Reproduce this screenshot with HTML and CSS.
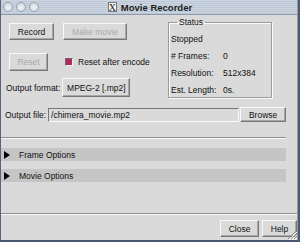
FILE: index.html
```html
<!DOCTYPE html>
<html lang="en">
<head>
    <meta charset="UTF-8">
    <title>Movie Recorder</title>
    <link rel="stylesheet" href="styles.css">
</head>
<body>
    <div class="window">
        <div class="titlebar">
            <div class="lights"><span></span><span></span><span></span></div>
            <div class="title"><span class="xicon">X</span>Movie Recorder</div>
        </div>

        <div class="content">
            <div class="top">
                <div class="controls">
                    <div class="row row-record">
                        <button class="btn btn-record">Record</button>
                        <button class="btn btn-make" disabled>Make movie</button>
                    </div>
                    <div class="row row-reset">
                        <button class="btn btn-reset" disabled>Reset</button>
                        <label class="check"><span class="box"></span>Reset after encode</label>
                    </div>
                    <div class="row row-format">
                        <span class="lbl">Output format:</span>
                        <button class="btn btn-menu">MPEG-2 [.mp2]</button>
                    </div>
                </div>

                <fieldset class="status">
                    <legend>Status</legend>
                    <div class="status-grid">
                        <span class="wide">Stopped</span>
                        <span># Frames:</span><span>0</span>
                        <span>Resolution:</span><span>512x384</span>
                        <span>Est. Length:</span><span>0s.</span>
                    </div>
                </fieldset>
            </div>

            <div class="file-row">
                <span class="lbl">Output file:</span>
                <input class="file-input" type="text" value="/chimera_movie.mp2">
                <button class="btn btn-browse">Browse</button>
            </div>

            <div class="sep sep-top"></div>

            <div class="section section-frame"><span class="arrow"></span>Frame Options</div>
            <div class="section section-movie"><span class="arrow"></span>Movie Options</div>

            <div class="sep sep-bottom"></div>

            <div class="bottom-row">
                <button class="btn btn-close">Close</button>
                <button class="btn btn-help">Help</button>
            </div>

            <svg class="grip" width="10" height="10" viewBox="0 0 10 10">
                <path d="M9 1 L1 9 M9 4 L4 9 M9 7 L7 9" stroke="#8a8a8a" stroke-width="1"/>
                <path d="M10 2 L2 10 M10 5 L5 10 M10 8 L8 10" stroke="#ffffff" stroke-width="1"/>
            </svg>
        </div>
    </div>
</body>
</html>
```

FILE: styles.css
```css
body {
    margin: 0;
    padding: 0;
    background-color: #4b5a74;
    font-family: 'Liberation Sans', Arial, sans-serif;
    font-size: 8.5px;
    color: #111;
}

.window {
    width: 298px;
    height: 240px;
    background-color: #dadada;
    border-left: 1px solid #56647c;
    border-right: 1px solid #9a9a9a;
    box-sizing: border-box;
    display: flex;
    flex-direction: column;
}

.titlebar {
    height: 15px;
    position: relative;
    background: repeating-linear-gradient(to bottom, #cdd5e0 0, #cdd5e0 1px, #bcc7d5 1px, #bcc7d5 2px);
    border-bottom: 1px solid #8e9aab;
    box-sizing: border-box;
    display: flex;
    align-items: center;
    justify-content: center;
}

.lights {
    position: absolute;
    left: 2px;
    top: 2px;
    display: flex;
    gap: 3px;
}

.lights span {
    width: 10px;
    height: 10px;
    border-radius: 50%;
    box-sizing: border-box;
    border: 1px solid #98a2ae;
    background: radial-gradient(circle at 50% 60%, #f0f2f5 0, #d6dbe2 70%);
}

.title {
    font-weight: bold;
    font-size: 9.5px;
    color: #1c1c1c;
    display: flex;
    align-items: center;
    margin-left: 2px;
}

.xicon {
    width: 9px;
    height: 10px;
    margin-right: 4px;
    border: 1px solid #777;
    background-color: #f4f4f4;
    font-family: 'Liberation Serif', serif;
    font-size: 10px;
    line-height: 10px;
    text-align: center;
    color: #222;
    box-sizing: border-box;
    font-weight: normal;
}

.content {
    flex: 1;
    position: relative;
    display: flex;
    flex-direction: column;
}

.btn {
    font-family: 'Liberation Sans', Arial, sans-serif;
    font-size: 8.5px;
    color: #111;
    background-color: #dadada;
    border: 1px solid;
    border-color: #f8f8f8 #777 #777 #f8f8f8;
    box-shadow: inset -1px -1px 0 #a8a8a8;
    padding: 0;
    margin: 0;
    box-sizing: border-box;
}

.btn:disabled {
    color: #a9a9a9;
}

.top {
    display: flex;
    height: 83px;
}

.controls {
    width: 167px;
    padding-top: 8px;
    display: flex;
    flex-direction: column;
}

.row {
    display: flex;
    align-items: center;
}

.row-record {
    height: 17px;
    padding-left: 8px;
    gap: 9px;
}

.btn-record {
    width: 45px;
    height: 17px;
}

.btn-make {
    width: 64px;
    height: 17px;
}

.row-reset {
    margin-top: 13px;
    height: 18px;
    padding-left: 8px;
}

.btn-reset {
    width: 39px;
    height: 18px;
}

.check {
    display: flex;
    align-items: center;
    margin-left: 17px;
}

.check .box {
    width: 8px;
    height: 8px;
    box-sizing: border-box;
    border: 1px solid;
    border-color: #6c6c6c #f4f4f4 #f4f4f4 #6c6c6c;
    background-color: #b0285e;
    margin-right: 5px;
}

.row-format {
    margin-top: 7px;
    height: 19px;
    padding-left: 5px;
}

.lbl {
    margin-right: 2px;
}

.btn-menu {
    width: 68px;
    height: 19px;
    margin-left: 0;
}

.status {
    margin: 2px 0 0 0;
    padding: 0 0 0 2px;
    width: 104px;
    height: 81px;
    box-sizing: border-box;
    border: 1px solid #9c9c9c;
    box-shadow: inset 1px 1px 0 #fbfbfb, 1px 1px 0 #fbfbfb;
}

.status legend {
    padding: 0 2px;
    margin-left: 6px;
    line-height: 11px;
}

.status-grid {
    display: grid;
    grid-template-columns: 52px auto;
    grid-auto-rows: 17px;
    align-items: center;
    margin-top: 2px;
}

.status-grid .wide {
    grid-column: span 2;
}

.file-row {
    display: flex;
    align-items: center;
    margin-top: 9px;
    padding-left: 4px;
    height: 15px;
}

.file-input {
    width: 191px;
    height: 14px;
    margin: 0 1px 0 0;
    padding: 0 2px;
    box-sizing: border-box;
    font-family: 'Liberation Sans', Arial, sans-serif;
    font-size: 8.5px;
    color: #111;
    background-color: #dadada;
    border: 1px solid;
    border-color: #777 #f8f8f8 #f8f8f8 #777;
    outline: none;
}

.btn-browse {
    width: 46px;
    height: 15px;
}

.sep {
    height: 2px;
    border-top: 1px solid #8e8e8e;
    border-bottom: 1px solid #fafafa;
    box-sizing: border-box;
}

.sep-top {
    margin-top: 15px;
    width: 285px;
}

.section {
    width: 285px;
    height: 13px;
    background-color: #c5c5c5;
    display: flex;
    align-items: center;
}

.section-frame {
    margin-top: 9px;
}

.section-movie {
    margin-top: 8px;
}

.arrow {
    width: 0;
    height: 0;
    border-top: 4px solid transparent;
    border-bottom: 4px solid transparent;
    border-left: 6px solid #000;
    margin: 0 9px 0 3px;
}

.sep-bottom {
    margin-top: 31px;
}

.bottom-row {
    display: flex;
    justify-content: flex-end;
    gap: 3px;
    margin-top: 5px;
}

.btn-close {
    width: 39px;
    height: 17px;
}

.btn-help {
    width: 35px;
    height: 17px;
}

.grip {
    position: absolute;
    right: 0;
    bottom: 0;
}
```
